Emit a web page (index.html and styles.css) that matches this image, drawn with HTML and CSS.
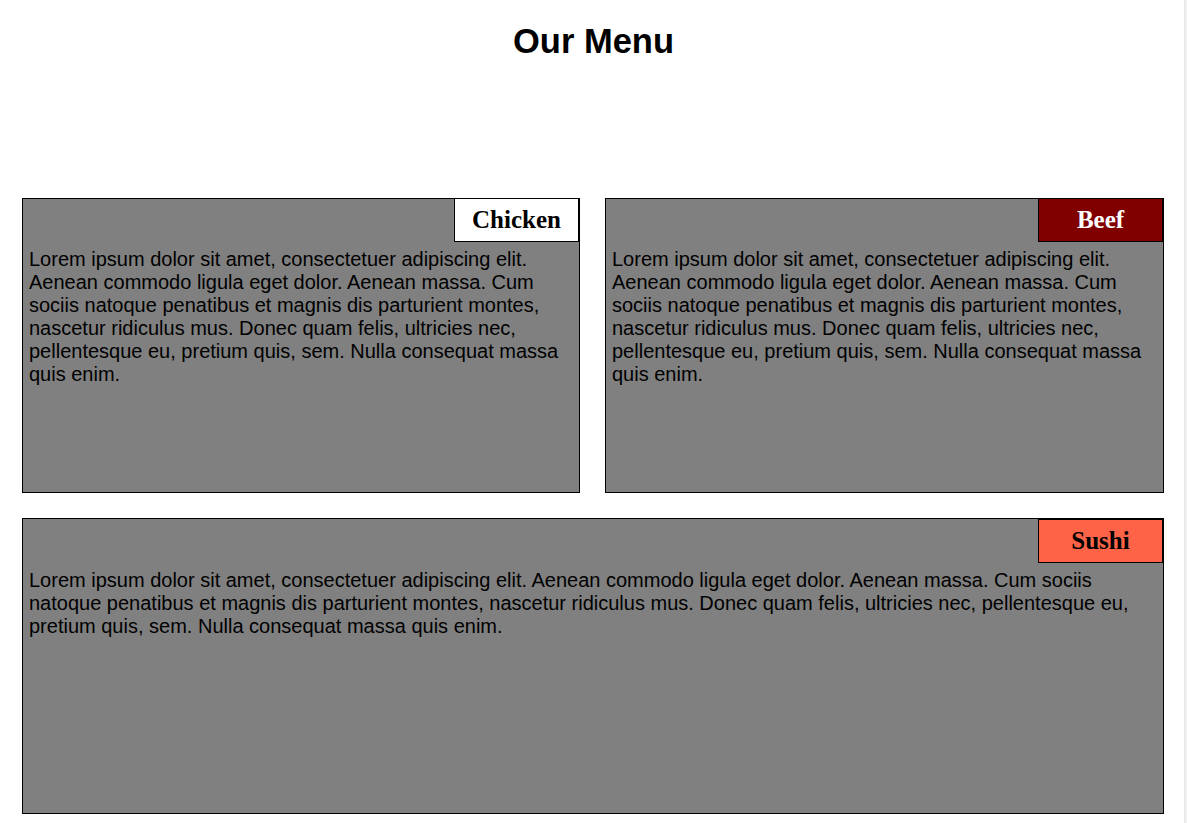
FILE: index.html
```html
<!DOCTYPE html>
<html lang="en">
<head>
<meta charset="utf-8">
<title>Our Menu</title>
<link rel="stylesheet" href="styles.css">
</head>
<body>
<h1 class="title">Our Menu</h1>
<main class="menu">
  <section class="card">
    <h2 class="badge badge-chicken">Chicken</h2>
    <p class="card-text">Lorem ipsum dolor sit amet, consectetuer adipiscing elit. Aenean commodo ligula eget dolor. Aenean massa. Cum sociis natoque penatibus et magnis dis parturient montes, nascetur ridiculus mus. Donec quam felis, ultricies nec, pellentesque eu, pretium quis, sem. Nulla consequat massa quis enim.</p>
  </section>
  <section class="card">
    <h2 class="badge badge-beef">Beef</h2>
    <p class="card-text">Lorem ipsum dolor sit amet, consectetuer adipiscing elit. Aenean commodo ligula eget dolor. Aenean massa. Cum sociis natoque penatibus et magnis dis parturient montes, nascetur ridiculus mus. Donec quam felis, ultricies nec, pellentesque eu, pretium quis, sem. Nulla consequat massa quis enim.</p>
  </section>
  <section class="card card-wide">
    <h2 class="badge badge-sushi">Sushi</h2>
    <p class="card-text">Lorem ipsum dolor sit amet, consectetuer adipiscing elit. Aenean commodo ligula eget dolor. Aenean massa. Cum sociis natoque penatibus et magnis dis parturient montes, nascetur ridiculus mus. Donec quam felis, ultricies nec, pellentesque eu, pretium quis, sem. Nulla consequat massa quis enim.</p>
  </section>
</main>
<div class="scroll-edge"></div>
</body>
</html>
```
FILE: styles.css
```css
html, body {
  margin: 0;
  padding: 0;
  background: #ffffff;
}

body {
  font-family: "Liberation Sans", Arial, sans-serif;
  color: #000000;
}

.title {
  margin: 21px 0 137px;
  font-size: 34.5px;
  line-height: 40px;
  font-weight: bold;
  text-align: center;
}

.menu {
  display: grid;
  grid-template-columns: 558fr 559fr;
  gap: 25px;
  width: 1142px;
  padding: 0 0 0 22px;
}

.card {
  display: flex;
  flex-direction: column;
  height: 295px;
  box-sizing: border-box;
  border: 1px solid #000000;
  background: #808080;
  padding: 0 6px;
}

.card-wide {
  grid-column: 1 / span 2;
  height: 296px;
}

.badge {
  align-self: flex-end;
  box-sizing: border-box;
  width: 125px;
  height: 44px;
  margin: -1px -6px 0 0;
  border: 1px solid #000000;
  font-family: "Liberation Serif", "Times New Roman", serif;
  font-size: 25px;
  font-weight: bold;
  line-height: 42px;
  text-align: center;
}

.card-wide .badge {
  margin-top: 0;
}

.badge-chicken {
  background: #ffffff;
  color: #000000;
}

.badge-beef {
  background: #800000;
  color: #ffffff;
}

.badge-sushi {
  background: #ff6347;
  color: #000000;
}

.card-text {
  margin: 6px 0 0;
  font-size: 20px;
  line-height: 23px;
}

.scroll-edge {
  position: fixed;
  top: 0;
  right: 0;
  bottom: 0;
  width: 2px;
  background: #f1f1f1;
  border-left: 1px solid #e6e6e6;
}
```
